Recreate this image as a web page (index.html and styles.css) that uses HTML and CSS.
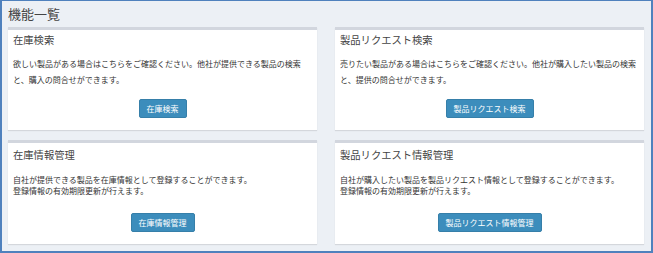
FILE: index.html
```html
<!DOCTYPE html>
<html lang="ja">
<head>
<meta charset="utf-8">
<title>機能一覧</title>
<link rel="stylesheet" href="styles.css">
</head>
<body>
<div class="frame">
  <h1 class="page-title">機能一覧</h1>
  <div class="grid">
    <section class="box box-top">
      <h2 class="box-title">在庫検索</h2>
      <p class="box-text">欲しい製品がある場合はこちらをご確認ください。他社が提供できる製品の検索と、購入の問合せができます。</p>
      <div class="box-actions"><button class="btn">在庫検索</button></div>
    </section>
    <section class="box box-top">
      <h2 class="box-title">製品リクエスト検索</h2>
      <p class="box-text">売りたい製品がある場合はこちらをご確認ください。他社が購入したい製品の検索と、提供の問合せができます。</p>
      <div class="box-actions"><button class="btn">製品リクエスト検索</button></div>
    </section>
    <section class="box box-bottom">
      <h2 class="box-title">在庫情報管理</h2>
      <p class="box-text">自社が提供できる製品を在庫情報として登録することができます。<br>登録情報の有効期限更新が行えます。</p>
      <div class="box-actions"><button class="btn">在庫情報管理</button></div>
    </section>
    <section class="box box-bottom">
      <h2 class="box-title">製品リクエスト情報管理</h2>
      <p class="box-text">自社が購入したい製品を製品リクエスト情報として登録することができます。<br>登録情報の有効期限更新が行えます。</p>
      <div class="box-actions"><button class="btn">製品リクエスト情報管理</button></div>
    </section>
  </div>
</div>
</body>
</html>
```
FILE: styles.css
```css
html, body {
  margin: 0;
  padding: 0;
}
body {
  font-family: "Noto Sans CJK JP", "Noto Sans", sans-serif;
  color: #333;
}
.frame {
  box-sizing: border-box;
  width: 653px;
  height: 253px;
  border: 2px solid #4f81bd;
  border-top-width: 1px;
  background: #ecf0f5;
  padding: 0 7px 0 6px;
}
.page-title {
  margin: 0;
  font-size: 13px;
  font-weight: normal;
  line-height: 26px;
  color: #444;
  padding-left: 0;
}
.grid {
  display: grid;
  grid-template-columns: 1fr 1fr;
  column-gap: 18px;
  row-gap: 10px;
}
.box {
  background: #fff;
  border-top: 3px solid #d2d6de;
  box-shadow: 0 1px 1px rgba(0, 0, 0, 0.1);
  padding: 0 5px 12px;
}
.box-title {
  margin: 0;
  font-size: 10.3px;
  font-weight: normal;
  line-height: 14px;
  color: #444;
  padding-top: 3px;
}
.box-text {
  margin: 9px 0 0;
  font-size: 8px;
  line-height: 16px;
  color: #333;
}
.box-actions {
  display: flex;
  justify-content: center;
  margin-top: 11px;
}
.box-bottom .box-title {
  padding-top: 5px;
}
.box-bottom .box-text {
  margin-top: 12px;
  line-height: 11px;
}
.box-bottom .box-actions {
  margin-top: 17px;
}
.btn {
  font-family: inherit;
  font-size: 8px;
  line-height: 11px;
  color: #fff;
  background: #3c8dbc;
  border: 1px solid #367fa9;
  border-radius: 2px;
  padding: 3px 7px;
  height: 19px;
  cursor: pointer;
}
```
